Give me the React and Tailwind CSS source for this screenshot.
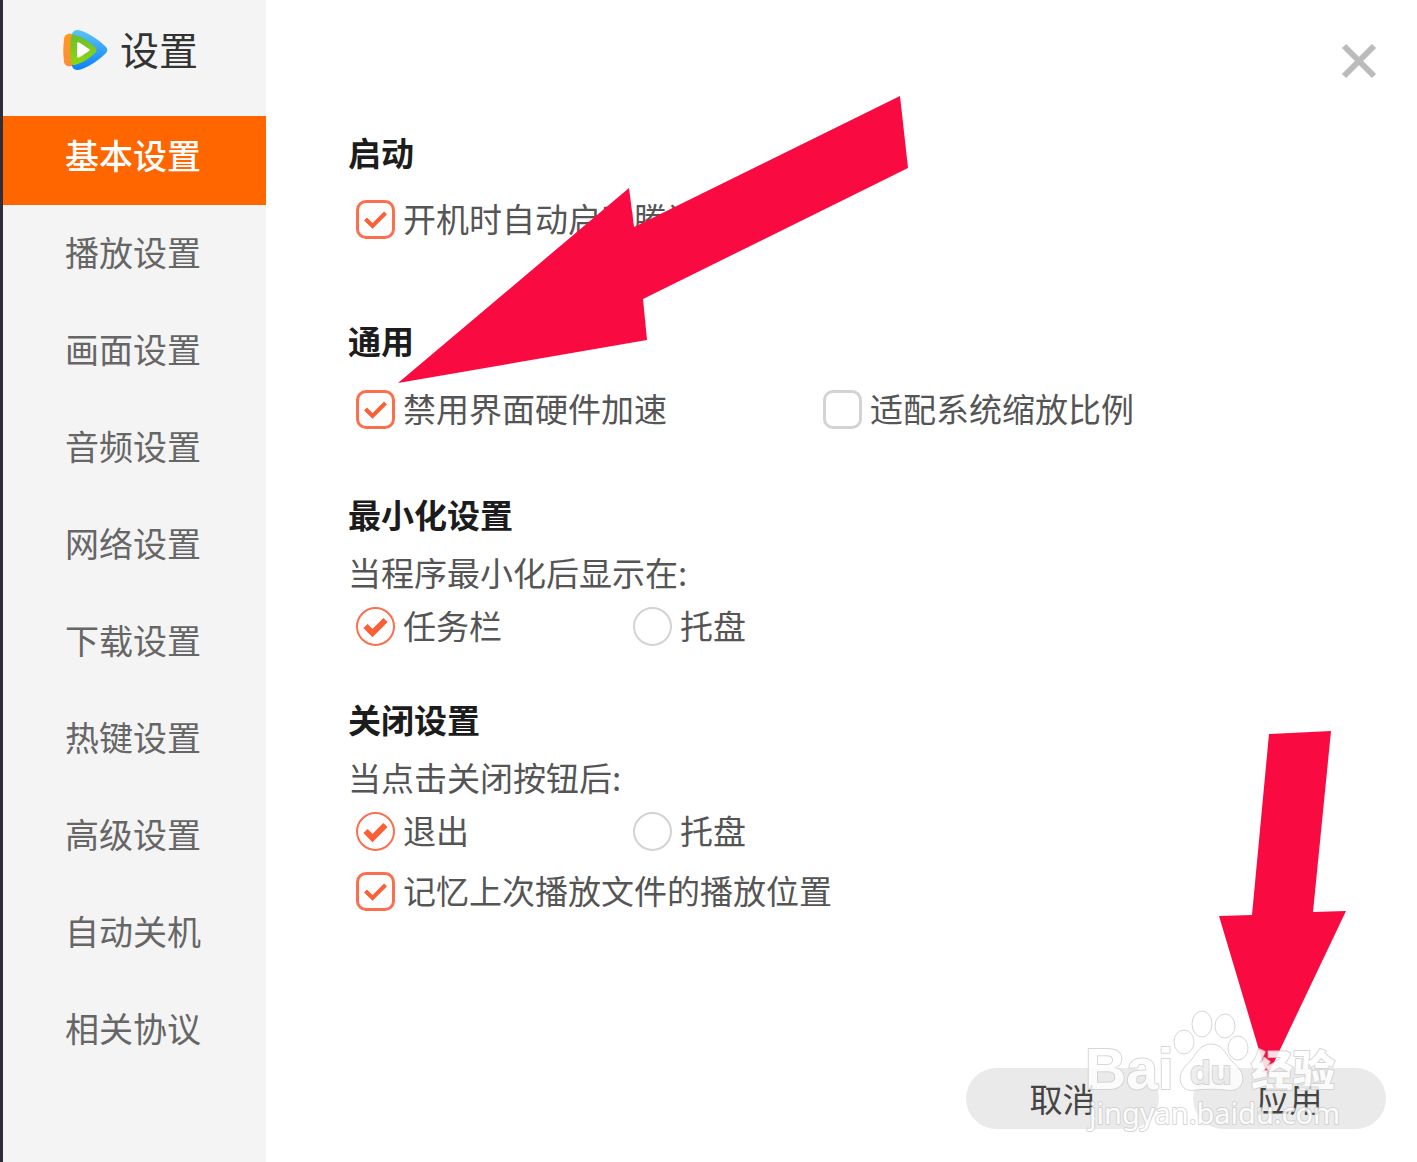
import React, { useState } from 'react';

const NAV_ITEMS = [
  '基本设置',
  '播放设置',
  '画面设置',
  '音频设置',
  '网络设置',
  '下载设置',
  '热键设置',
  '高级设置',
  '自动关机',
  '相关协议',
];

const PlayLogo = () => (
  <svg viewBox="0 0 46 42" className="w-[46px] h-[42px]" aria-hidden="true">
    <defs>
      <linearGradient id="logo-blue" x1="0" y1="0" x2="0" y2="1">
        <stop offset="0" stopColor="#5cc4f5" />
        <stop offset="1" stopColor="#0d80fb" />
      </linearGradient>
      <linearGradient id="logo-green" x1="0" y1="0" x2="0" y2="1">
        <stop offset="0" stopColor="#6cbf2c" />
        <stop offset="1" stopColor="#8ed60f" />
      </linearGradient>
      <linearGradient id="logo-orange" x1="0" y1="0" x2="0" y2="1">
        <stop offset="0" stopColor="#ff9a1c" />
        <stop offset="1" stopColor="#ff8a3a" />
      </linearGradient>
    </defs>
    <path
      d="M10 5C11 1 15 0 20 2C28 5 37 11 43 17C46 20 46 22 43 25C37 31 28 37 20 40C15 42 11 41 10 37C8 27 8 15 10 5Z"
      fill="url(#logo-blue)"
    />
    <path
      d="M10 5C5 4 2 6 2 11C1 18 1 25 2 32C2 36 5 38 10 37Z"
      fill="url(#logo-orange)"
    />
    <path
      d="M9 8C10 5 13 6 16 7C22 9 29 14 33 18C35 20 35 22 33 24C29 28 22 33 16 35C13 36 10 37 9 34C8 26 8 16 9 8Z"
      fill="url(#logo-green)"
    />
    <path
      d="M15 15C15 13 16 13 18 14L27 20C28 21 28 21 27 22L18 28C16 29 15 29 15 27Z"
      fill="#fff"
    />
  </svg>
);

const Option = ({ type = 'checkbox', name, label, defaultChecked }) => (
  <label className="flex items-center gap-2 h-10 whitespace-nowrap cursor-pointer">
    <span className="relative w-[39px] h-[39px] shrink-0">
      <input
        type={type}
        name={name}
        defaultChecked={defaultChecked}
        className={
          'peer block w-full h-full appearance-none border-[#d3d3d3] bg-white checked:border-[#fb6f4c] ' +
          (type === 'radio'
            ? 'rounded-full border-2'
            : 'rounded-[10px] border-3')
        }
      />
      <svg
        viewBox="0 0 39 39"
        className="hidden peer-checked:block absolute inset-0 pointer-events-none"
        aria-hidden="true"
      >
        <path
          d="M9.500 19L16.500 26L29.500 13"
          fill="none"
          stroke="#fb5f36"
          strokeWidth={type === 'radio' ? 6 : 4}
        />
      </svg>
    </span>
    {label}
  </label>
);

const Heading = ({ children }) => (
  <h2 className="h-10 leading-10 font-bold text-[#1c1c1c]">{children}</h2>
);

const Watermark = () => (
  <svg
    viewBox="0 0 260 126"
    className="absolute right-[73px] bottom-[28px] w-[260px] h-[126px] pointer-events-none"
    fill="#fff"
    stroke="#d0d0d0"
    strokeWidth="2"
    strokeLinejoin="round"
    opacity="0.85"
    aria-hidden="true"
  >
    <g strokeWidth="1">
      <ellipse cx="100" cy="34" rx="10" ry="12" />
      <ellipse cx="118" cy="16" rx="10" ry="13" />
      <ellipse cx="141" cy="18" rx="10" ry="12" />
      <ellipse cx="154" cy="40" rx="10" ry="12" />
      <path d="M127 36C117 36 113 44 108 51C103 57 96 62 96 71C97 80 103 84 112 82C122 81 132 81 142 82C151 84 158 80 159 71C159 62 151 57 146 51C141 44 137 36 127 36Z" />
    </g>
    <text
      x="1"
      y="81"
      className="font-['Liberation_Sans'] font-bold text-[57px] [paint-order:stroke]"
    >
      Bai
    </text>
    <text
      x="106"
      y="76"
      fill="#ececec"
      className="font-['Liberation_Sans'] font-bold text-[34px] [paint-order:stroke]"
    >
      du
    </text>
    <text
      x="167"
      y="78"
      className="font-['Noto_Sans_CJK_SC'] font-black text-[42px] [paint-order:stroke]"
    >
      经验
    </text>
    <text
      x="5"
      y="116"
      className="font-['Noto_Sans'] text-[29px] [paint-order:stroke]"
    >
      jingyan.baidu.com
    </text>
  </svg>
);

export default function App() {
  const [active, setActive] = useState('基本设置');

  return (
    <div className="relative flex min-h-screen bg-white font-['Noto_Sans_CJK_SC',sans-serif] text-[33px] text-[#555]">
      <aside className="w-[266px] shrink-0 border-l-3 border-[#302d36] bg-[#f4f4f4]">
        <header className="flex items-center gap-3 h-[116px] pl-[59px] pb-4">
          <PlayLogo />
          <h1 className="pb-1 text-[39px] leading-10 text-[#333]">设置</h1>
        </header>
        <nav className="flex flex-col gap-2 text-[34px]">
          {NAV_ITEMS.map((item) => (
            <button
              key={item}
              type="button"
              onClick={() => setActive(item)}
              className={
                'h-[89px] pb-3 pl-[62px] text-left cursor-pointer ' +
                (item === active
                  ? 'bg-[#ff6600] text-white font-medium'
                  : 'text-[#666]')
              }
            >
              {item}
            </button>
          ))}
        </nav>
      </aside>

      <main className="flex flex-1 flex-col min-w-0">
        <form
          className="flex flex-1 flex-col pl-[82px] pt-[132px]"
          onSubmit={(e) => e.preventDefault()}
        >
          <section>
            <Heading>启动</Heading>
            <div className="mt-[27px] pl-2">
              <Option label="开机时自动启动腾讯视频" defaultChecked />
            </div>
          </section>

          <section className="mt-[81px]">
            <Heading>通用</Heading>
            <div className="mt-[29px] pl-2 flex">
              <div className="w-[467px]">
                <Option label="禁用界面硬件加速" defaultChecked />
              </div>
              <Option label="适配系统缩放比例" />
            </div>
          </section>

          <section className="mt-[65px]">
            <Heading>最小化设置</Heading>
            <p className="mt-[18px] leading-10">当程序最小化后显示在:</p>
            <div className="mt-[14px] pl-2 flex">
              <div className="w-[277px]">
                <Option
                  type="radio"
                  name="minimize"
                  label="任务栏"
                  defaultChecked
                />
              </div>
              <Option type="radio" name="minimize" label="托盘" />
            </div>
          </section>

          <section className="mt-[53px]">
            <Heading>关闭设置</Heading>
            <p className="mt-[18px] leading-10">当点击关闭按钮后:</p>
            <div className="mt-[14px] pl-2 flex">
              <div className="w-[277px]">
                <Option type="radio" name="close" label="退出" defaultChecked />
              </div>
              <Option type="radio" name="close" label="托盘" />
            </div>
            <div className="mt-5 pl-2">
              <Option label="记忆上次播放文件的播放位置" defaultChecked />
            </div>
          </section>

          <footer className="mt-auto flex justify-end gap-[34px] pr-[31px] pb-[33px] text-[#444]">
            <button
              type="button"
              className="w-[193px] h-[61px] rounded-full bg-[#eaeaea] cursor-pointer"
            >
              取消
            </button>
            <button
              type="submit"
              className="w-[193px] h-[61px] rounded-full bg-[#eaeaea] cursor-pointer"
            >
              应用
            </button>
          </footer>
        </form>
      </main>

      <button
        type="button"
        aria-label="关闭"
        className="absolute top-[43px] right-10 cursor-pointer"
      >
        <svg viewBox="0 0 36 36" className="w-9 h-9">
          <path
            d="M3 3L33 33M33 3L3 33"
            stroke="#bbb"
            strokeWidth="6"
            fill="none"
          />
        </svg>
      </button>

      {/* pointer arrows */}
      <svg
        viewBox="0 0 511 288"
        className="absolute left-[398px] top-[95px] w-[511px] h-[288px] pointer-events-none"
        aria-hidden="true"
      >
        <path
          d="M0 288L231 93L236 132L502 1L510 73L245 204L249 245Z"
          fill="#f90a40"
        />
      </svg>
      <svg
        viewBox="0 0 127 346"
        className="absolute right-[71px] bottom-[85px] w-[127px] h-[346px] pointer-events-none"
        aria-hidden="true"
      >
        <path
          d="M50 3L112 0L94 181L127 180L48 346L0 185L33 184Z"
          fill="#f90a40"
        />
      </svg>
      <Watermark />
    </div>
  );
}
